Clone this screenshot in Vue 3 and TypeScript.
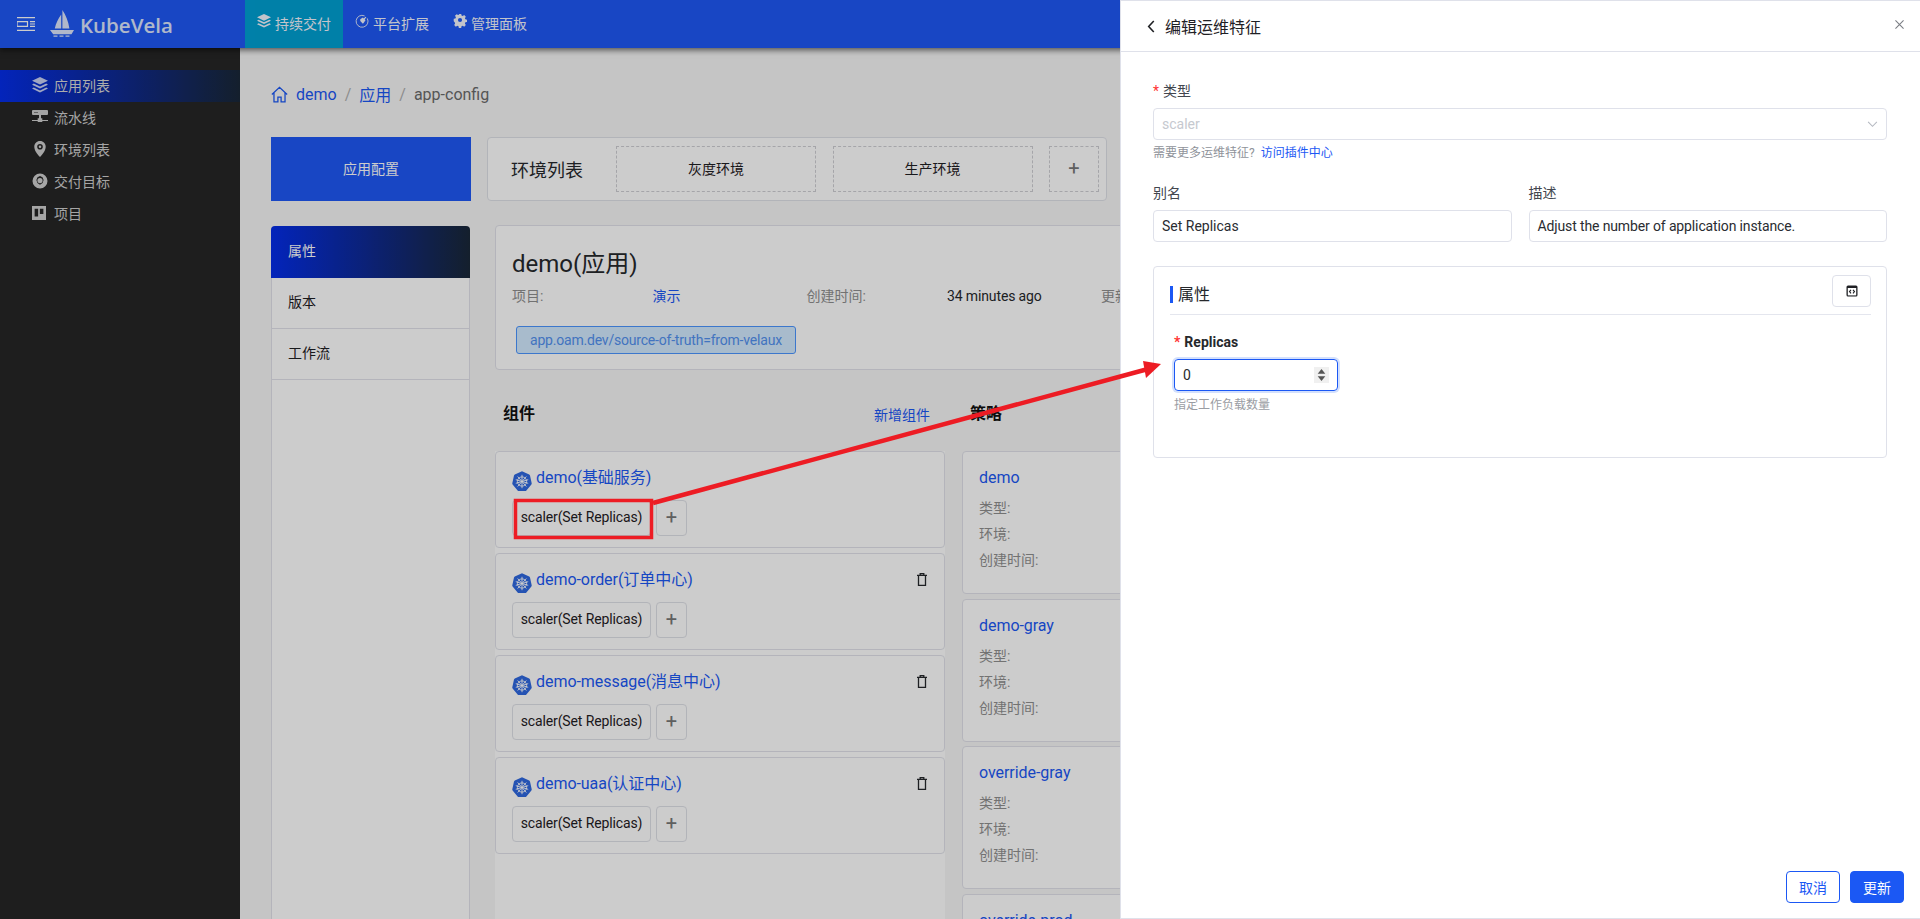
<script setup lang="ts">
const menu = ['应用列表', '流水线', '环境列表', '交付目标', '项目']
const comps = [
  { name: 'demo(基础服务)', del: false },
  { name: 'demo-order(订单中心)', del: true },
  { name: 'demo-message(消息中心)', del: true },
  { name: 'demo-uaa(认证中心)', del: true },
]
const policies = ['demo', 'demo-gray', 'override-gray', 'override-prod']
</script>

<template>
  <div class="page">
    <header class="topbar">
      <div class="brand">
        <svg class="burger" viewBox="0 0 18 14" width="18" height="14" fill="none" stroke="#fff" stroke-width="1.2">
          <path d="M0 .6h18M0 13.4h18M0 4.600h10.500v4.800H0zM13 4.600h5M13 9.400h5M13 7h5" />
        </svg>
        <svg class="boat" viewBox="0 0 24 28" width="24" height="28" fill="#fff" opacity=".85">
          <path d="M12.400 0c3.400 5 6 11.500 7 18.500h-7zM11.200 4.500v14H4.800c1-5 3.400-10 6.400-14z" />
          <path d="M0 20h24l-2.500 4.200H3.200zM3.500 25.500h4v1.300h-4zM9.500 25.500h4v1.300h-4zM15.500 25.500h4v1.300h-4z" />
        </svg>
        <span class="logo">KubeVela</span>
      </div>
      <nav class="topnav">
        <a class="nav on">
          <svg viewBox="0 0 16 16" width="14" height="14" fill="#fff"><path d="M8 0l8 3.800-8 3.800L0 3.800zM1.800 6.600L8 9.500l6.200-2.900L16 7.700l-8 3.800-8-3.800zM1.800 10.500L8 13.400l6.200-2.900 1.800 1.100L8 15.400 0 11.600z" /></svg>
          持续交付
        </a>
        <a class="nav">
          <svg viewBox="0 0 16 16" width="14" height="14" fill="none" stroke="#fff"><path d="M11 2.200A6.800 6.800 0 1 0 14 5" /><path fill="#fff" stroke="none" d="M6 6l3-2 1 1 2-2 1 1-2 2 1 1-2 3-1 1-3-3z" /></svg>
          平台扩展
        </a>
        <a class="nav">
          <svg viewBox="0 0 16 16" width="14" height="14" fill="#fff"><path fill-rule="evenodd" d="M6.500 0h3l.4 2.200 1.500.7 1.900-1.200 2.100 2.100-1.200 1.900.6 1.500 2.200.4v3l-2.200.4-.6 1.500 1.200 1.900-2.100 2.100-1.900-1.200-1.500.6-.4 2.200h-3l-.4-2.200-1.500-.6-1.900 1.200-2.100-2.100 1.200-1.900-.6-1.500L0 9.500v-3l2.200-.4.6-1.500L1.600 2.700l2.100-2.100 1.900 1.200 1.500-.7zM8 5.400a2.600 2.600 0 1 0 0 5.200 2.600 2.600 0 0 0 0-5.200z" transform="scale(.9) translate(.9 -.4)" /></svg>
          管理面板
        </a>
      </nav>
    </header>

    <div class="body">
      <aside class="sidebar">
        <a v-for="(m, i) in menu" :key="m" class="side-item" :class="{ on: i === 0 }">
          <span class="side-ico">
            <svg v-if="i === 0" viewBox="0 0 16 16" width="16" height="16" fill="#fff"><path d="M8 0l8 3.800-8 3.800L0 3.800zM1.800 6.600L8 9.500l6.200-2.900L16 7.700l-8 3.800-8-3.800zM1.800 10.500L8 13.400l6.200-2.900 1.800 1.100L8 15.400 0 11.600z" /></svg>
            <svg v-else-if="i === 1" viewBox="0 0 16 16" width="16" height="16" fill="#fff"><path fill-rule="evenodd" d="M1 1h14a1 1 0 0 1 1 1v3a1 1 0 0 1-1 1H9v3.300h1.300V11H16v1h-5.700v1H5.700v-1H0v-1h5.700V9.300H7V6H1a1 1 0 0 1-1-1V2a1 1 0 0 1 1-1zm1.500 2v1h1V3zm2 0v1h1V3z" /></svg>
            <svg v-else-if="i === 2" viewBox="0 0 16 16" width="16" height="16" fill="#fff"><path fill-rule="evenodd" d="M8 0c3.300 0 5.700 2.500 5.700 5.700 0 3.600-3 7.600-5.700 10.300C5.300 13.300 2.300 9.300 2.300 5.700 2.300 2.500 4.700 0 8 0zm0 3a2.800 2.800 0 1 0 0 5.600A2.800 2.800 0 0 0 8 3zm0 1.500a1.300 1.300 0 1 1 0 2.600 1.300 1.300 0 0 1 0-2.600z" /></svg>
            <svg v-else-if="i === 3" viewBox="0 0 16 16" width="16" height="16" fill="#fff"><path fill-rule="evenodd" d="M8 .5a7.500 7.500 0 1 1 0 15 7.500 7.500 0 0 1 0-15zM8 3L5.500 4.200 4.400 7l1 3 2.600 1.800L10.600 10l1-3-1.100-2.800zm0 2a2.600 2.600 0 1 1 0 5.200A2.600 2.600 0 0 1 8 5z" /></svg>
            <svg v-else viewBox="0 0 16 16" width="14" height="14" fill="#fff"><path fill-rule="evenodd" d="M0 0h16v16H0zM3 3v9h4V3zm6 0v6h4V3z" /></svg>
          </span>
          {{ m }}
        </a>
      </aside>

      <main class="main">
        <div class="crumbs">
          <svg viewBox="0 0 16 16" width="17" height="17" fill="none" stroke="#1b58f4" stroke-width="1.200"><path d="M.8 8L8 1.200 15.200 8M2.800 6.500V15h3.700v-4.500h3V15h3.700V6.500" /></svg>
          <a class="link first">demo</a><span class="sep">/</span>
          <a class="link">应用</a><span class="sep">/</span>
          <span class="cur">app-config</span>
        </div>

        <div class="top-row">
          <div class="config-btn">应用配置</div>
          <div class="env-card">
            <span class="env-title">环境列表</span>
            <div class="env-box">灰度环境</div>
            <div class="env-box">生产环境</div>
            <div class="env-box plus">+</div>
          </div>
        </div>

        <div class="lower">
          <div class="left-menu">
            <div class="lm-item on">属性</div>
            <div class="lm-item">版本</div>
            <div class="lm-item">工作流</div>
          </div>

          <div class="right">
            <section class="info">
              <h1>demo(应用)</h1>
              <div class="meta">
                <span class="mk">项目:</span><a class="mv link2">演示</a>
                <span class="mk">创建时间:</span><span class="mv latin">34 minutes ago</span>
                <span class="mk">更新时间:</span>
              </div>
              <span class="tag">app.oam.dev/source-of-truth=from-velaux</span>
            </section>

            <div class="cols">
              <div class="col-comp">
                <div class="col-head">
                  <b>组件</b>
                  <a class="add">新增组件</a>
                </div>
                <div class="comp-list">
                  <div v-for="c in comps" :key="c.name" class="comp">
                    <div class="comp-title">
                      <svg class="k8s" viewBox="0 0 20 20" width="20" height="20">
                        <path fill="#2f68e0" d="M10 .2l7.200 3.400q.6.300.8 1l1.700 7.600q.1.700-.3 1.200l-5 6.200q-.4.500-1.100.5H6.700q-.7 0-1.100-.5l-5-6.200q-.4-.5-.3-1.200L2 4.600q.2-.7.8-1z" />
                        <g fill="none" stroke="#fff" stroke-width=".9">
                          <circle cx="10" cy="10.500" r="4.600" />
                          <path d="M10 3.800v13.400M3.800 8.700l12.400 3.600M16.200 8.700L3.800 12.300M5.700 5.500l8.600 10M14.300 5.500l-8.600 10" />
                        </g>
                      </svg>
                      <a class="comp-name">{{ c.name }}</a>
                      <svg v-if="c.del" class="trash" viewBox="0 0 10 13" width="10" height="13" fill="none" stroke="#26282c" stroke-width="1.300"><path d="M0 2.300h10M3.200 2.300V.7h3.600v1.600M1.500 2.300v10h7v-10" /></svg>
                    </div>
                    <div class="chips">
                      <span class="chip latin">scaler(Set Replicas)</span>
                      <span class="chip add-chip">+</span>
                    </div>
                  </div>
                </div>
              </div>

              <div class="col-pol">
                <div class="col-head"><b>策略</b></div>
                <div class="pol-list">
                  <div v-for="p in policies" :key="p" class="pol">
                    <a class="comp-name">{{ p }}</a>
                    <div class="pk">类型:</div>
                    <div class="pk">环境:</div>
                    <div class="pk">创建时间:</div>
                  </div>
                </div>
              </div>
            </div>
          </div>
        </div>
      </main>
    </div>

    <div class="mask"></div>

    <aside class="drawer">
      <div class="d-head">
        <svg viewBox="0 0 8 14" width="8" height="13" fill="none" stroke="#1f2024" stroke-width="1.700"><path d="M7 1L1.500 7 7 13" /></svg>
        <span class="d-title">编辑运维特征</span>
        <svg class="d-close" viewBox="0 0 10 10" width="9" height="9" fill="none" stroke="#7a7d83" stroke-width="1.200"><path d="M.5.500l9 9M9.500.500l-9 9" /></svg>
      </div>
      <div class="d-body">
        <label class="lab"><i>*</i>类型</label>
        <div class="inp disabled">
          <span>scaler</span>
          <svg viewBox="0 0 12 8" width="11" height="7" fill="none" stroke="#b4b8c0" stroke-width="1.200"><path d="M1 1l5 5 5-5" /></svg>
        </div>
        <p class="hint">需要更多运维特征? <a>访问插件中心</a></p>
        <div class="two">
          <div class="field">
            <label class="lab">别名</label>
            <div class="inp">Set Replicas</div>
          </div>
          <div class="field">
            <label class="lab">描述</label>
            <div class="inp latin">Adjust the number of application instance.</div>
          </div>
        </div>
        <section class="prop">
          <div class="prop-head">
            <span class="prop-title">属性</span>
            <span class="code-btn">
              <svg viewBox="0 0 12 12" width="12" height="12"><rect x=".5" y=".5" width="11" height="11" rx="1.500" fill="#1f2024" /><rect x="1.800" y="3" width="8.400" height="7.400" fill="#fff" /><path d="M5 4.800L3.500 6.600 5 8.400M7 4.800l1.500 1.800L7 8.400" fill="none" stroke="#1f2024" stroke-width="1.100" /></svg>
            </span>
          </div>
          <label class="lab rep"><i>*</i>Replicas</label>
          <div class="num">
            <span>0</span>
            <span class="spin">
              <svg viewBox="0 0 10 16" width="15" height="16"><path d="M5 2l3.800 4.800H1.200zM5 14L1.200 9.200h7.600z" fill="#555" /></svg>
            </span>
          </div>
          <p class="hint h2">指定工作负载数量</p>
        </section>
      </div>
      <div class="d-foot">
        <button class="btn ghost">取消</button>
        <button class="btn primary">更新</button>
      </div>
    </aside>

    <svg class="arrow" width="1920" height="919" viewBox="0 0 1920 919">
      <rect x="515.500" y="500.500" width="136" height="37" fill="none" stroke="#ed1c24" stroke-width="3.500" />
      <path d="M653 503L1148 369" stroke="#ed1c24" stroke-width="4.500" fill="none" />
      <path d="M1161 364L1146 378 1143 361z" fill="#ed1c24" />
    </svg>
  </div>
</template>

<style>
html, body { margin: 0; padding: 0; }
</style>

<style scoped>
* { box-sizing: border-box; }
.page {
  position: relative;
  width: 1920px;
  height: 919px;
  overflow: hidden;
  background: #f7f7f7;
  display: flex;
  flex-direction: column;
  font-family: Roboto, "Noto Sans CJK SC", sans-serif;
  font-size: 14px;
  color: #1f2024;
}
a { color: inherit; text-decoration: none; }
.latin { letter-spacing: -.13px; }

.topbar {
  height: 48px;
  flex: none;
  background: #1e58f5;
  display: flex;
  position: relative;
  box-shadow: 0 2px 6px rgba(0, 0, 0, .6);
  color: #fff;
}
.brand { width: 245px; display: flex; align-items: center; padding-left: 17px; }
.boat { margin-left: 15px; margin-top: -1px; }
.logo {
  margin-left: 6px;
  font-family: "Open Sans", sans-serif;
  font-size: 20.500px;
  font-weight: 600;
  margin-top: 2px;
  opacity: .85;
}
.topnav { display: flex; }
.nav {
  display: flex;
  align-items: center;
  gap: 4px;
  padding: 0 12px 3px 12px;
  font-size: 14px;
  height: 48px;
  opacity: .95;
}
.nav svg { margin-top: -4px; }
.nav.on { background: #00a4d2; width: 98px; padding-left: 12px; }

.body { flex: 1; display: flex; min-height: 0; }
.sidebar { width: 240px; flex: none; background: #262626; padding-top: 22px; }
.side-item {
  height: 32px;
  display: flex;
  align-items: center;
  padding: 0 0 2px 32px;
  color: #cfcfcf;
  font-size: 14px;
}
.side-item.on { background: linear-gradient(90deg, #042dea, #192738); color: #d8d8d8; }
.side-ico { width: 22px; display: flex; justify-content: flex-start; opacity: .78; }

.main { flex: 1; min-width: 0; padding: 34px 0 0 31px; }
.crumbs {
  height: 24px;
  display: flex;
  align-items: center;
  font-size: 16px;
  margin-bottom: 31px;
  color: #1b58f4;
}
.link.first { margin-left: 8px; }
.sep { color: #b0b0b0; margin: 0 8px 0 8px; }
.cur { color: #6b6b6b; }
.link { color: #1b58f4; }

.top-row { display: flex; width: 836px; gap: 16px; height: 64px; }
.config-btn {
  width: 200px;
  flex: none;
  background: #1e58f5;
  color: #fff;
  display: flex;
  align-items: center;
  justify-content: center;
  padding-bottom: 3px;
}
.env-card {
  flex: 1;
  background: #fff;
  border: 1px solid #dfe1e8;
  border-radius: 4px;
  display: flex;
  align-items: center;
  padding-left: 23px;
  gap: 16.500px;
}
.env-title { font-size: 18px; width: 87px; color: #26282c; margin-right: 1.500px; }
.env-box {
  width: 200px;
  height: 46px;
  border: 1px dashed #cfcfd4;
  display: flex;
  align-items: center;
  justify-content: center;
  font-size: 14px;
  padding-bottom: 2px;
}
.env-box.plus { width: 50px; font-size: 20px; color: #777; }

.lower { display: flex; margin-top: 24px; height: 700px; gap: 25px; }
.left-menu {
  width: 199px;
  flex: none;
  background: #fff;
  border: 1px solid #e1e2ea;
  border-bottom: 0;
  margin-top: 1px;
  border-radius: 4px 4px 0 0;
}
.lm-item {
  height: 51px;
  display: flex;
  align-items: center;
  padding: 0 0 5px 16px;
  border-bottom: 1px solid #e1e2ea;
}
.lm-item.on {
  margin: -1px -1px 0;
  padding-left: 17px;
  height: 52px;
  background: linear-gradient(90deg, #042dea, #192738);
  color: #fff;
  border: 0;
  border-radius: 4px 4px 0 0;
}

.right { width: 1380px; flex: none; }
.info {
  height: 145px;
  background: #fff;
  border: 1px solid #e1e2ea;
  border-radius: 4px;
  padding: 22px 16px 0;
}
.info h1 { margin: 0; font-size: 24px; font-weight: 400; line-height: 32px; color: #26282c; }
.meta { display: flex; margin-top: 5px; line-height: 22px; }
.mk { width: 140.500px; color: #8f8f8f; }
.mv { width: 154px; color: #26282c; }
.link2 { color: #1b58f4; }
.tag {
  display: inline-flex;
  align-items: center;
  height: 28px;
  margin: 19px 0 0 4px;
  padding: 0 13px;
  background: #d2eaff;
  border: 1px solid #4c95ff;
  border-radius: 3px;
  color: #5291f0;
  letter-spacing: -.2px;
}

.cols { display: flex; gap: 17px; }
.col-comp { width: 450px; flex: none; }
.col-pol { flex: 1; }
.col-head {
  height: 81px;
  display: flex;
  align-items: center;
  justify-content: space-between;
  padding: 2px 15px 0 8px;
}
.col-head b { font-size: 16px; font-weight: 700; color: #111; }
.add { color: #1b58f4; margin-top: 5px; }
.comp-list { background: #fff; height: 470px; display: flex; flex-direction: column; gap: 5px; }
.comp {
  height: 97px;
  background: #fff;
  border: 1px solid #e1e2ea;
  border-radius: 4px;
  padding: 14px 16px 0;
}
.comp-title { display: flex; align-items: flex-start; height: 34px; }
.k8s { margin-top: 5px; margin-right: 4px; flex: none; }
.comp-name { font-size: 16px; line-height: 24px; color: #1b58f4; letter-spacing: -.05px; }
.trash { margin-left: auto; margin-top: 5px; margin-right: 1px; }
.chips { display: flex; gap: 5px; }
.chip {
  height: 36px;
  width: 139px;
  border: 1px solid #dfe1e8;
  border-radius: 4px;
  display: flex;
  align-items: center;
  justify-content: center;
  white-space: nowrap;
  padding-bottom: 2px;
}
.add-chip { width: 31px; font-size: 20px; color: #777; letter-spacing: 0; }
.pol-list { display: flex; flex-direction: column; gap: 4.500px; }
.pol {
  height: 143px;
  background: #fff;
  border: 1px solid #e1e2ea;
  border-radius: 4px;
  padding: 14px 16px 0;
}
.pk { color: #8f8f8f; line-height: 26px; }
.pol .comp-name + .pk { margin-top: 5px; }

.mask { position: absolute; inset: 0; background: rgba(0, 0, 0, .2); z-index: 10; }

.drawer {
  position: absolute;
  top: 0;
  right: 0;
  bottom: 0;
  width: 800px;
  background: #fff;
  border: 1px solid #dfe1ea;
  border-right: 0;
  z-index: 11;
  display: flex;
  flex-direction: column;
  color: #26282c;
}
.d-head {
  height: 51px;
  flex: none;
  border-bottom: 1px solid #dfe1ea;
  display: flex;
  align-items: center;
  padding-left: 26px;
}
.d-title { font-size: 16px; margin-left: 10px; color: #1f2024; }
.d-close { margin-left: auto; margin-right: 16px; margin-top: -3px; }
.d-body { flex: 1; padding: 29px 33px 0 32px; }
.lab { display: block; line-height: 20px; height: 20px; color: #42464e; }
.lab i { color: #f33; font-style: normal; margin-right: 4px; font-size: 14px; }
.inp {
  height: 32px;
  margin-top: 7px;
  border: 1px solid #dfe1ea;
  border-radius: 4px;
  display: flex;
  align-items: center;
  padding: 0 8px;
  color: #2a2c31;
  justify-content: space-between;
}
.inp.disabled { color: #c6c9cf; margin-top: 7px; }
.hint { margin: 4px 0 0; font-size: 12px; line-height: 18px; color: #8f939a; }
.hint a { color: #1b58f4; margin-left: 3px; }
.two { display: flex; gap: 17px; margin-top: 21px; }
.field { flex: 1; }
.prop {
  margin-top: 24px;
  height: 192px;
  border: 1px solid #dfe1ea;
  border-radius: 4px;
  padding: 8px 15px 0 16px;
}
.prop-head {
  display: flex;
  align-items: center;
  justify-content: space-between;
  height: 40px;
  border-bottom: 1px solid #e4e6ee;
  padding-bottom: 7px;
}
.prop-title {
  border-left: 3px solid #1b58f4;
  padding-left: 5px;
  font-size: 16px;
  line-height: 17px;
  height: 17px;
  margin-top: 6px;
  color: #26282c;
}
.code-btn {
  width: 39px;
  height: 32px;
  margin-left: -1px;
  border: 1px solid #dfe1ea;
  border-radius: 4px;
  display: flex;
  align-items: center;
  justify-content: center;
}
.rep { margin: 17px 0 0 4px; font-weight: 700; color: #26282c; }
.num {
  width: 164px;
  height: 32px;
  margin: 7px 0 0 4px;
  border: 1px solid #1b58f4;
  border-radius: 4px;
  box-shadow: 0 0 0 2px #d3e0fd;
  display: flex;
  align-items: center;
  justify-content: space-between;
  padding: 0 8px 0 8px;
  font-size: 14px;
}
.spin { width: 15px; height: 16px; background: #f0f0f0; display: block; line-height: 0; }
.h2 { margin: 5px 0 0 4px; color: #9a9da3; }
.d-foot {
  height: 47px;
  flex: none;
  display: flex;
  justify-content: flex-end;
  gap: 10px;
  padding-right: 16px;
}
.btn {
  width: 54px;
  height: 32px;
  border-radius: 4px;
  font-family: inherit;
  font-size: 14px;
  border: 1px solid #1b58f4;
  padding: 0;
}
.ghost { background: #fff; color: #1b58f4; }
.primary { background: #1b58f4; color: #fff; }
.arrow { position: absolute; top: 0; left: 0; z-index: 12; pointer-events: none; }
</style>
